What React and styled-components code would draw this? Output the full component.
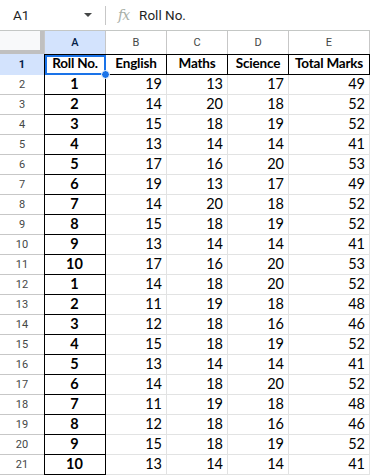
import React from "react";
import styled, { createGlobalStyle, css } from "styled-components";

const GlobalStyle = createGlobalStyle`
  html, body {
    margin: 0;
    padding: 0;
    background: #ffffff;
  }
  body {
    font-family: Roboto, "Noto Sans", sans-serif;
  }
`;

const rows = [
  [1, 19, 13, 17, 49],
  [2, 14, 20, 18, 52],
  [3, 15, 18, 19, 52],
  [4, 13, 14, 14, 41],
  [5, 17, 16, 20, 53],
  [6, 19, 13, 17, 49],
  [7, 14, 20, 18, 52],
  [8, 15, 18, 19, 52],
  [9, 13, 14, 14, 41],
  [10, 17, 16, 20, 53],
  [1, 14, 18, 20, 52],
  [2, 11, 19, 18, 48],
  [3, 12, 18, 16, 46],
  [4, 15, 18, 19, 52],
  [5, 13, 14, 14, 41],
  [6, 14, 18, 20, 52],
  [7, 11, 19, 18, 48],
  [8, 12, 18, 16, 46],
  [9, 15, 18, 19, 52],
  [10, 13, 14, 14, 41],
];

const headers = ["Roll No.", "English", "Maths", "Science", "Total Marks"];
const letters = ["A", "B", "C", "D", "E"];

const Sheet = styled.div`
  width: 370px;
  height: 476px;
  overflow: hidden;
  background: #fff;
`;

const FormulaBar = styled.div`
  height: 30px;
  display: flex;
  align-items: center;
  border-bottom: 1px solid #c4c7c5;
  font-size: 13.5px;
  color: #1f1f1f;
`;

const NameBox = styled.div`
  width: 105px;
  height: 100%;
  display: flex;
  align-items: center;
  justify-content: space-between;
  padding: 0 13px 0 13px;
  box-sizing: border-box;
`;

const Caret = styled.span`
  width: 0;
  height: 0;
  border-left: 4px solid transparent;
  border-right: 4px solid transparent;
  border-top: 4px solid #444746;
`;

const Divider = styled.span`
  width: 1px;
  height: 19px;
  background: #c7c7c7;
`;

const Fx = styled.span`
  font-family: "DejaVu Serif", "Liberation Serif", serif;
  font-style: italic;
  font-size: 14px;
  color: #a8b0a8;
  margin: 0 10px 0 12px;
  letter-spacing: -1px;
`;

const Grid = styled.div`
  display: grid;
  grid-template-columns: 44px 62px 61px 61px 61px 81px;
`;

const ColHead = styled.div`
  height: 23px;
  box-sizing: border-box;
  display: flex;
  align-items: center;
  justify-content: center;
  font-size: 11px;
  color: #444746;
  border-right: 1px solid #c7c7c7;
  ${(p) => p.$first && css`border-left: 1px solid #c7c7c7;`}
  ${(p) =>
    p.$selected &&
    css`
      background: #d3e3fd;
      color: #041e49;
      font-weight: 500;
    `}
`;

const Corner = styled.div`
  height: 23px;
  background: #f8f9fa;
  box-sizing: border-box;
  box-shadow: inset -4px -4px 0 #c0c0c0;
`;

const RowHead = styled.div`
  height: ${(p) => (p.$tall ? 21 : 20)}px;
  box-sizing: border-box;
  display: flex;
  align-items: center;
  justify-content: center;
  font-size: 11px;
  color: #444746;
  border-bottom: 1px solid #c7c7c7;
  ${(p) =>
    p.$selected &&
    css`
      background: #d3e3fd;
      color: #041e49;
      font-weight: 700;
      border-bottom: none;
    `}
`;

const Cell = styled.div`
  position: relative;
  height: ${(p) => (p.$tall ? 21 : 20)}px;
  box-sizing: border-box;
  display: flex;
  align-items: flex-end;
  justify-content: ${(p) => (p.$center ? "center" : "flex-end")};
  padding: 0 4px 2px 3px;
  font-family: Lato, "Open Sans", sans-serif;
  font-size: 14.5px;
  line-height: 17px;
  white-space: nowrap;
  color: #000;
  font-weight: ${(p) => (p.$bold ? 700 : 400)};
  border-bottom: 1px solid ${(p) => (p.$boxed ? "#000" : "#e2e3e3")};
  border-right: 1px solid ${(p) => (p.$boxed ? "#000" : "#e2e3e3")};
  ${(p) => p.$first && css`border-left: 1px solid #000;`}
  ${(p) =>
    p.$top &&
    css`
      border-top: 1px solid #000;
      font-size: 13.5px;
      letter-spacing: -0.2px;
      padding: 0 2px 2px 2px;
    `}
  ${(p) => p.$active && css`z-index: 2;`}
`;

const Selection = styled.span`
  position: absolute;
  top: 0;
  left: 0;
  right: -1px;
  bottom: -1px;
  border: 2px solid #1a73e8;
  pointer-events: none;
`;

const Handle = styled.span`
  position: absolute;
  right: -5px;
  bottom: -5px;
  width: 7px;
  height: 7px;
  border-radius: 50%;
  background: #1a73e8;
  border: 1px solid #fff;
`;

export default function App() {
  return (
    <Sheet>
      <GlobalStyle />
      <FormulaBar>
        <NameBox>
          <span>A1</span>
          <Caret />
        </NameBox>
        <Divider />
        <Fx>fx</Fx>
        <span>Roll No.</span>
      </FormulaBar>
      <Grid>
        <Corner />
        {letters.map((l, i) => (
          <ColHead key={l} $first={i === 0} $selected={i === 0}>
            {l}
          </ColHead>
        ))}

        <RowHead $tall $selected>1</RowHead>
        {headers.map((h, i) => (
          <Cell
            key={h}
            $tall
            $top
            $boxed
            $bold
            $center
            $first={i === 0}
            $active={i === 0}
          >
            {h}
            {i === 0 && (
              <>
                <Selection />
                <Handle />
              </>
            )}
          </Cell>
        ))}

        {rows.map((r, ri) => (
          <React.Fragment key={ri}>
            <RowHead>{ri + 2}</RowHead>
            {r.map((v, ci) => (
              <Cell
                key={ci}
                $first={ci === 0}
                $boxed={ci === 0}
                $bold={ci === 0}
                $center={ci === 0}
              >
                {v}
              </Cell>
            ))}
          </React.Fragment>
        ))}
      </Grid>
    </Sheet>
  );
}
